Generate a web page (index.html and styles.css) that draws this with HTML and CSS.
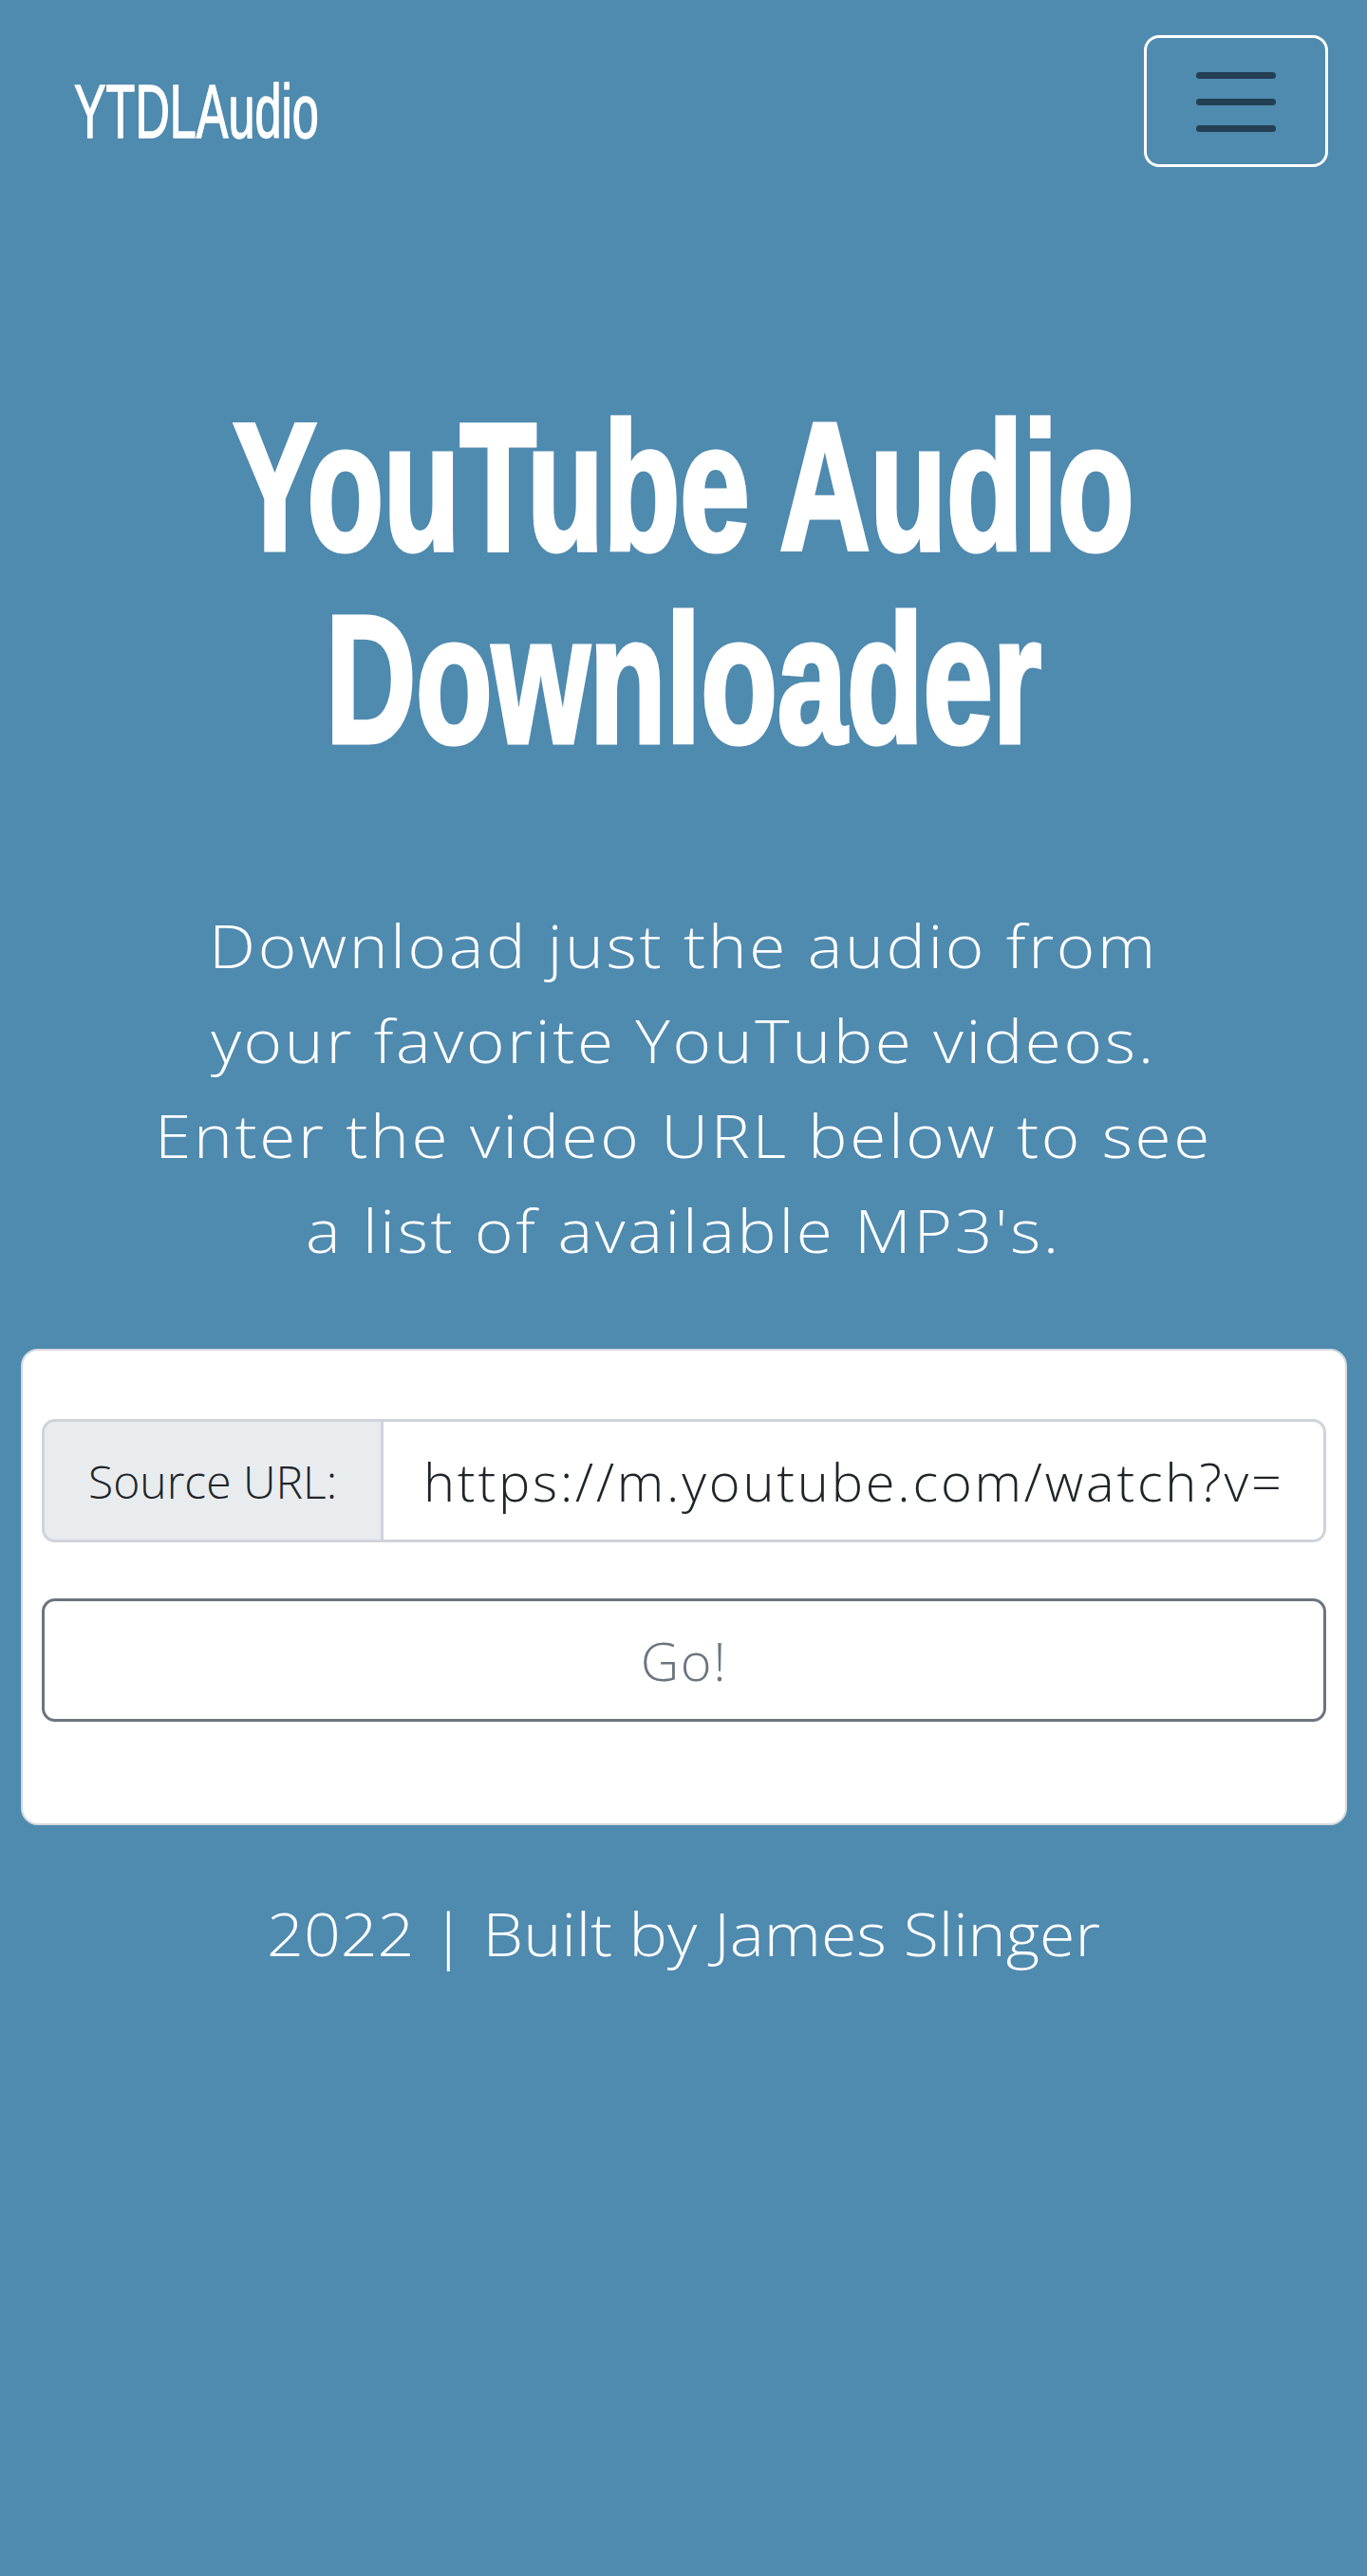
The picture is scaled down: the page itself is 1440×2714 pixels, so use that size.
FILE: index.html
```html
<!DOCTYPE html>
<html lang="en">
<head>
<meta charset="utf-8">
<title>YTDLAudio</title>
<link rel="stylesheet" href="styles.css">
</head>
<body>
<nav class="navbar">
  <a class="brand" href="#">YTDLAudio</a>
  <button class="toggler" type="button" aria-label="Toggle navigation">
    <svg class="toggler-icon" width="84" height="63" viewBox="0 0 84 63">
      <path d="M3.5 3.5H80.5M3.5 31.5H80.5M3.5 59.5H80.5" stroke="#233f53" stroke-width="7" stroke-linecap="round" fill="none"/>
    </svg>
  </button>
</nav>
<main class="hero">
  <h1 class="title"><span class="title-line">YouTube Audio</span><span class="title-line">Downloader</span></h1>
  <p class="lead">Download just the audio from<br>your favorite YouTube videos.<br>Enter the video URL below to see<br>a list of available MP3's.</p>
  <div class="card">
    <form class="card-body">
      <div class="input-group">
        <span class="input-label">Source URL:</span>
        <input class="input" type="text" value="https://m.youtube.com/watch?v=">
      </div>
      <button class="go" type="button">Go!</button>
    </form>
  </div>
  <footer class="footer">2022 | Built by James Slinger</footer>
</main>
</body>
</html>
```
FILE: styles.css
```css
html {
  background: #4f8aaf;
}
body {
  margin: 0;
  min-height: 2714px;
  background: #4f8aaf;
  font-family: "Open Sans", "Liberation Sans", sans-serif;
  font-weight: 350;
  color: #ffffff;
}
.navbar {
  display: flex;
  justify-content: space-between;
  align-items: flex-start;
  height: 204px;
  box-sizing: border-box;
  padding: 37px 41px 0 78px;
}
.brand {
  display: inline-block;
  margin-top: 41px;
  font-family: "Liberation Sans", sans-serif;
  font-weight: 400;
  font-size: 80px;
  line-height: 80px;
  color: #ffffff;
  text-decoration: none;
  transform: scaleX(0.63);
  transform-origin: left center;
  -webkit-text-stroke: 1.5px #ffffff;
}
.toggler {
  width: 194px;
  height: 139px;
  box-sizing: border-box;
  border: 3px solid #ffffff;
  border-radius: 16px;
  background: transparent;
  padding: 0;
  display: flex;
  align-items: center;
  justify-content: center;
}
.toggler-icon {
  display: block;
  margin-top: 2px;
}
.hero {
  display: flex;
  flex-direction: column;
}
.title {
  margin: 207px 0 0;
  font-family: "Liberation Sans", sans-serif;
  font-weight: 700;
  font-size: 191px;
  line-height: 203px;
  text-align: center;
  color: #ffffff;
  transform: scaleX(0.69);
  transform-origin: center;
  -webkit-text-stroke: 5px #ffffff;
  white-space: nowrap;
}
.title-line {
  display: block;
}
.lead {
  margin: 129px 0 0;
  font-size: 63px;
  line-height: 100px;
  letter-spacing: 2.4px;
  text-align: center;
  transform: scaleX(1.1);
  transform-origin: center;
}
.card {
  margin: 75px 21px 0 22px;
  background: #ffffff;
  border: 2px solid #d5dade;
  border-radius: 18px;
}
.card-body {
  margin: 0;
  padding: 72px 20px 107px;
  display: flex;
  flex-direction: column;
}
.input-group {
  display: flex;
  height: 130px;
}
.input-label {
  display: flex;
  align-items: center;
  box-sizing: border-box;
  width: 360px;
  padding: 0 42px 0 46px;
  background: #e9ecef;
  border: 3px solid #ced4da;
  border-radius: 14px 0 0 14px;
  font-weight: 350;
  font-size: 48px;
  color: #212529;
  white-space: nowrap;
}
.input {
  flex: 1;
  min-width: 0;
  box-sizing: border-box;
  height: 130px;
  margin: 0 0 0 -3px;
  padding: 0 42px;
  border: 3px solid #ced4da;
  border-radius: 0 14px 14px 0;
  background: #ffffff;
  font-family: "Open Sans", "Liberation Sans", sans-serif;
  font-weight: 350;
  font-size: 56px;
  letter-spacing: 2.8px;
  color: #212529;
  outline: none;
}
.go {
  margin-top: 59px;
  height: 130px;
  box-sizing: border-box;
  border: 3px solid #6c757d;
  border-radius: 14px;
  background: #ffffff;
  font-family: "Open Sans", "Liberation Sans", sans-serif;
  font-weight: 350;
  font-size: 56px;
  letter-spacing: 1.5px;
  color: #6c757d;
}
.footer {
  margin-top: 64px;
  font-size: 63px;
  line-height: 100px;
  text-align: center;
  transform: scaleX(1.08);
  transform-origin: center;
}
```
